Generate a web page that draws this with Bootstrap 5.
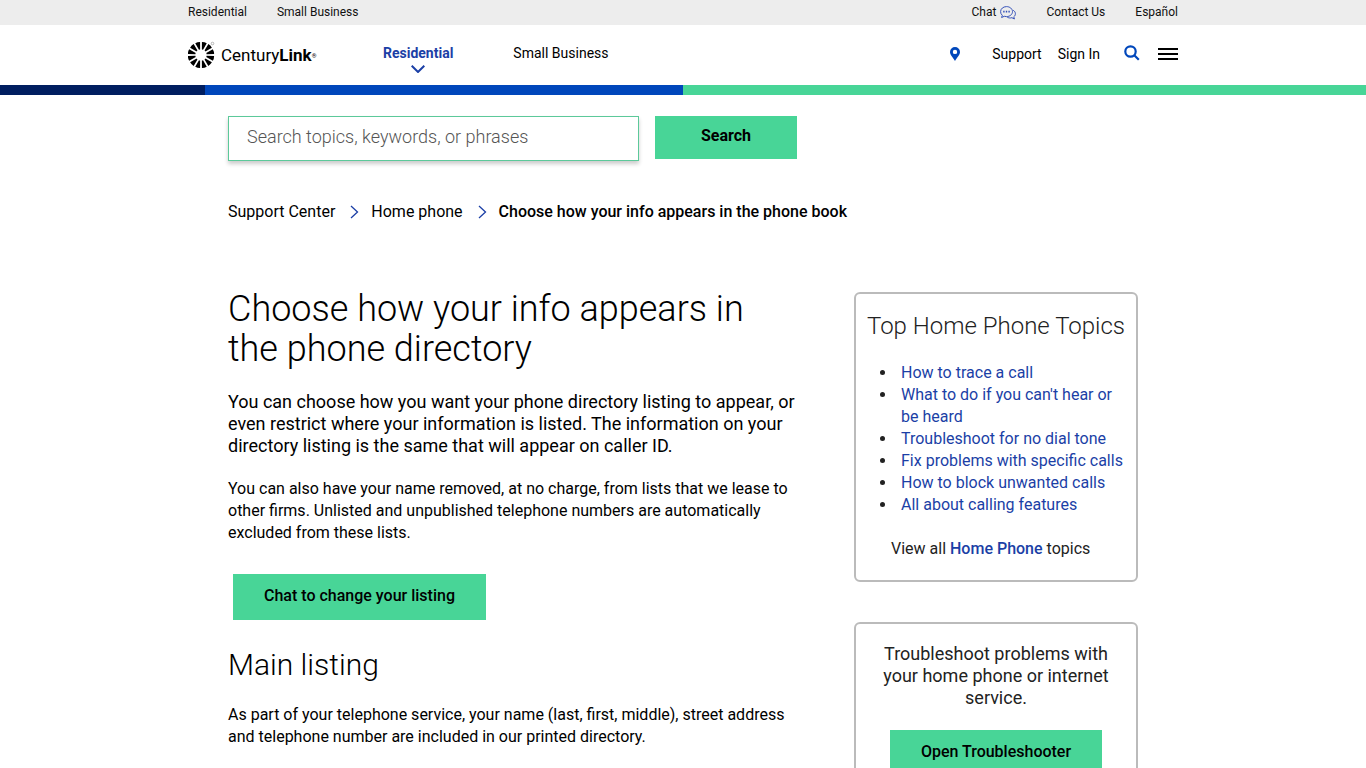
<!DOCTYPE html>
<html lang="en">
<head>
<meta charset="utf-8">
<meta name="viewport" content="width=device-width, initial-scale=1">
<title>Choose how your info appears in the phone book | CenturyLink</title>
<link href="https://cdn.jsdelivr.net/npm/bootstrap@5.3.0/dist/css/bootstrap.min.css" rel="stylesheet">
<style>
  :root { --cl-blue: #0047bb; --cl-link: #1b3fa6; --cl-navy: #001e60; --cl-green: #48d597; }
  body { font-family: Roboto, "Liberation Sans", sans-serif; font-size: 16px; line-height: 22px; color: #000; background: #fff; }
  a { color: inherit; text-decoration: none; }
  a:hover { text-decoration: underline; }
  svg { display: block; }
  .shell { width: 100%; max-width: 990px; margin: 0 auto; }
  .shell-inner { max-width: 910px; }
  .topbar { background: #ededed; font-size: 12px; line-height: 25px; color: #111; }
  .topbar nav { gap: 30px; }
  .masthead { min-height: 60px; }
  .brand { gap: 6px; width: 195px; font-size: 17px; line-height: 22px; }
  .brand:hover { text-decoration: none; }
  .brand-name sup { font-size: 6px; }
  .mainnav { gap: 60px; font-size: 14px; line-height: 20px; padding-top: 6px; }
  .mainnav .current { color: var(--cl-link); font-weight: 700; }
  .mainnav .current svg { margin-top: 2px; }
  .tools { gap: 16px; font-size: 14px; line-height: 20px; padding-bottom: 2px; }
  .tools .pin { margin-right: 16px; }
  .icon-btn { border: 0; padding: 0; background: none; color: var(--cl-blue); }
  .find-btn { margin: 0 2px 2px 8px; }
  .stripe { height: 10px; background: var(--cl-green); }
  .stripe .navy { width: 15%; background: var(--cl-navy); }
  .stripe .blue { width: 35%; background: var(--cl-blue); }
  .search-row { margin-top: 21px; gap: 16px; }
  .search-box { width: 411px; height: 45px; padding: 0 18px 4px; border: 1px solid #5cc99a; border-radius: 0; font-size: 18px; font-weight: 300; box-shadow: 0 3px 4px rgba(0,0,0,.2); }
  .search-box::placeholder { color: #555; opacity: 1; }
  .btn-cl { --bs-btn-bg: var(--cl-green); --bs-btn-color: #000; --bs-btn-hover-bg: #36c184; --bs-btn-hover-color: #000; border: 0; border-radius: 0; font-weight: 500; line-height: 22px; padding: 11px 31px 13px; }
  .btn-search { width: 142px; height: 43px; padding: 9px 0 12px; font-weight: 700; }
  .crumbs { margin: 40px 0 0; gap: 15px; }
  .crumbs li { gap: 12px; }
  .crumbs .here { font-weight: 500; }
  .columns { margin-top: 66px; gap: 40px; }
  .article-col { max-width: 586px; }
  h1 { font-size: 36px; line-height: 40px; font-weight: 300; margin: 0 0 22px; max-width: 540px; }
  h2 { font-size: 30px; line-height: 36px; font-weight: 300; margin: 0 0 21px; }
  .intro { font-size: 18px; margin: 0 0 21px; padding-right: 10px; }
  .detail { margin: 0 0 22px; max-width: 568px; }
  .btn-chat { margin: 8px 0 27px 5px; }
  .side-col { width: 284px; gap: 40px; margin-top: 3px; color: #222; }
  .panel { border: 2px solid #bbb; border-radius: 6px; }
  .topics-panel { padding: 17px 0 20px; }
  .panel h3 { font-size: 24px; line-height: 30px; font-weight: 300; margin: 0 0 21px; white-space: nowrap; }
  .topics { padding: 0 12px 0 41px; margin: 0 0 22px; }
  .topics li { padding-left: 4px; }
  .panel a { color: var(--cl-link); }
  .view-all { margin: 0; padding-left: 35px; }
  .view-all a { font-weight: 500; }
  .trouble { padding: 19px 22px 28px; font-size: 18px; }
  .trouble p { margin: 0 0 21px; }
</style>
</head>
<body>
<header>
  <div class="topbar">
    <div class="shell d-flex justify-content-between">
      <nav class="d-flex" aria-label="Customer type"><a href="#">Residential</a><a href="#">Small Business</a></nav>
      <nav class="d-flex" aria-label="Contact">
        <a href="#" class="d-flex align-items-center gap-1">Chat
          <svg width="16" height="14" viewBox="0 0 16 14" fill="none" stroke="#3450b8" stroke-width="1"><path d="M2.300 9.300A4.500 4.500 0 0 1 .6 5.600C.6 2.800 3.200.6 6.500.6s6 2.200 6 5-2.600 5-6 5c-.8 0-1.500-.1-2.200-.3L1.600 11.500z"/><path d="M13.200 4.300c1.400.8 2.200 2 2.200 3.400 0 1.300-.6 2.300-1.600 3.100l.6 2.200-2.500-1.300c-1.600.5-3.400.3-4.700-.6"/><path d="M3.200 5.600h1.400M5.800 5.600h1.400M8.400 5.600h1.400" stroke-width="1.600"/></svg>
        </a>
        <a href="#">Contact Us</a><a href="#">Español</a>
      </nav>
    </div>
  </div>
  <div class="shell masthead d-flex align-items-center">
    <a href="#" class="brand d-flex align-items-center">
      <svg width="27" height="28" viewBox="0 0 27 28" aria-hidden="true">
        <defs><path id="ray" d="M-2.500-12.900Q0-13.600 2.500-12.900L.6-5.600Q0-5.800-.6-5.600z"/></defs>
        <g transform="translate(13 14)" fill="#000">
          <use href="#ray" transform="rotate(15)"/><use href="#ray" transform="rotate(45)"/><use href="#ray" transform="rotate(75)"/><use href="#ray" transform="rotate(105)"/><use href="#ray" transform="rotate(135)"/><use href="#ray" transform="rotate(165)"/><use href="#ray" transform="rotate(195)"/><use href="#ray" transform="rotate(225)"/><use href="#ray" transform="rotate(255)"/><use href="#ray" transform="rotate(285)"/><use href="#ray" transform="rotate(315)"/><use href="#ray" transform="rotate(345)"/>
        </g>
        <circle cx="24.500" cy="2.500" r="1.300" fill="none" stroke="#777" stroke-width=".5"/>
      </svg>
      <span class="brand-name">Century<b>Link</b><sup>®</sup></span>
    </a>
    <nav class="mainnav d-flex" aria-label="Main">
      <a href="#" class="current d-flex flex-column align-items-center">Residential
        <svg width="14" height="8" viewBox="0 0 14 8" fill="none" stroke="currentColor" stroke-width="2"><path d="M.700.700 7 7 13.300.700"/></svg>
      </a>
      <a href="#">Small Business</a>
    </nav>
    <div class="tools d-flex align-items-center ms-auto">
      <a href="#" aria-label="Location" class="pin"><svg width="10" height="14" viewBox="0 0 10 14"><path fill="#0047bb" fill-rule="evenodd" d="M5 0a5 5 0 0 1 5 5c0 2.700-2.500 5-5 9C2.500 10 0 7.700 0 5a5 5 0 0 1 5-5zm0 2.700a2.200 2.200 0 1 0 0 4.400 2.200 2.200 0 0 0 0-4.400z"/></svg></a>
      <a href="#">Support</a><a href="#">Sign In</a>
      <button class="icon-btn find-btn" type="button" aria-label="Search"><svg width="16" height="16" viewBox="0 0 16 16" fill="none" stroke="currentColor" stroke-width="2.200"><circle cx="6.500" cy="6.500" r="5.200"/><path d="m10.300 10.300 4.500 4.500"/></svg></button>
      <button class="icon-btn text-black" type="button" aria-label="Menu"><svg width="20" height="12" viewBox="0 0 20 12" stroke="currentColor" stroke-width="2"><path d="M0 1h20M0 6h20M0 11h20"/></svg></button>
    </div>
  </div>
  <div class="stripe d-flex"><div class="navy"></div><div class="blue"></div></div>
</header>
<main class="shell shell-inner">
  <form class="search-row d-flex align-items-start" role="search">
    <input type="search" class="search-box" aria-label="Search support" placeholder="Search topics, keywords, or phrases">
    <button type="submit" class="btn btn-cl btn-search">Search</button>
  </form>
  <nav aria-label="Breadcrumb">
    <ol class="crumbs list-unstyled d-flex">
      <li class="d-flex align-items-center"><a href="#">Support Center</a></li>
      <li class="d-flex align-items-center"><svg width="9" height="14" viewBox="0 0 9 14" fill="none" stroke="#1b3fa6" stroke-width="1.300"><path d="m1 1 6.500 6L1 13"/></svg><a href="#">Home phone</a></li>
      <li class="d-flex align-items-center here" aria-current="page"><svg width="9" height="14" viewBox="0 0 9 14" fill="none" stroke="#1b3fa6" stroke-width="1.300"><path d="m1 1 6.500 6L1 13"/></svg>Choose how your info appears in the phone book</li>
    </ol>
  </nav>
  <div class="columns d-flex justify-content-between align-items-start">
    <article class="article-col">
      <h1>Choose how your info appears in the phone directory</h1>
      <p class="intro">You can choose how you want your phone directory listing to appear, or even restrict where your information is listed. The information on your directory listing is the same that will appear on caller ID.</p>
      <p class="detail">You can also have your name removed, at no charge, from lists that we lease to other firms. Unlisted and unpublished telephone numbers are automatically excluded from these lists.</p>
      <button type="button" class="btn btn-cl btn-chat">Chat to change your listing</button>
      <h2>Main listing</h2>
      <p class="detail">As part of your telephone service, your name (last, first, middle), street address and telephone number are included in our printed directory.</p>
    </article>
    <aside class="side-col d-flex flex-column flex-shrink-0">
      <section class="panel topics-panel">
        <h3 class="text-center">Top Home Phone Topics</h3>
        <ul class="topics">
          <li><a href="#">How to trace a call</a></li>
          <li><a href="#">What to do if you can't hear or be heard</a></li>
          <li><a href="#">Troubleshoot for no dial tone</a></li>
          <li><a href="#">Fix problems with specific calls</a></li>
          <li><a href="#">How to block unwanted calls</a></li>
          <li><a href="#">All about calling features</a></li>
        </ul>
        <p class="view-all">View all <a href="#">Home Phone</a> topics</p>
      </section>
      <section class="panel trouble text-center">
        <p>Troubleshoot problems with your home phone or internet service.</p>
        <button type="button" class="btn btn-cl">Open Troubleshooter</button>
      </section>
    </aside>
  </div>
</main>
<script src="https://cdn.jsdelivr.net/npm/bootstrap@5.3.0/dist/js/bootstrap.bundle.min.js"></script>
</body>
</html>
